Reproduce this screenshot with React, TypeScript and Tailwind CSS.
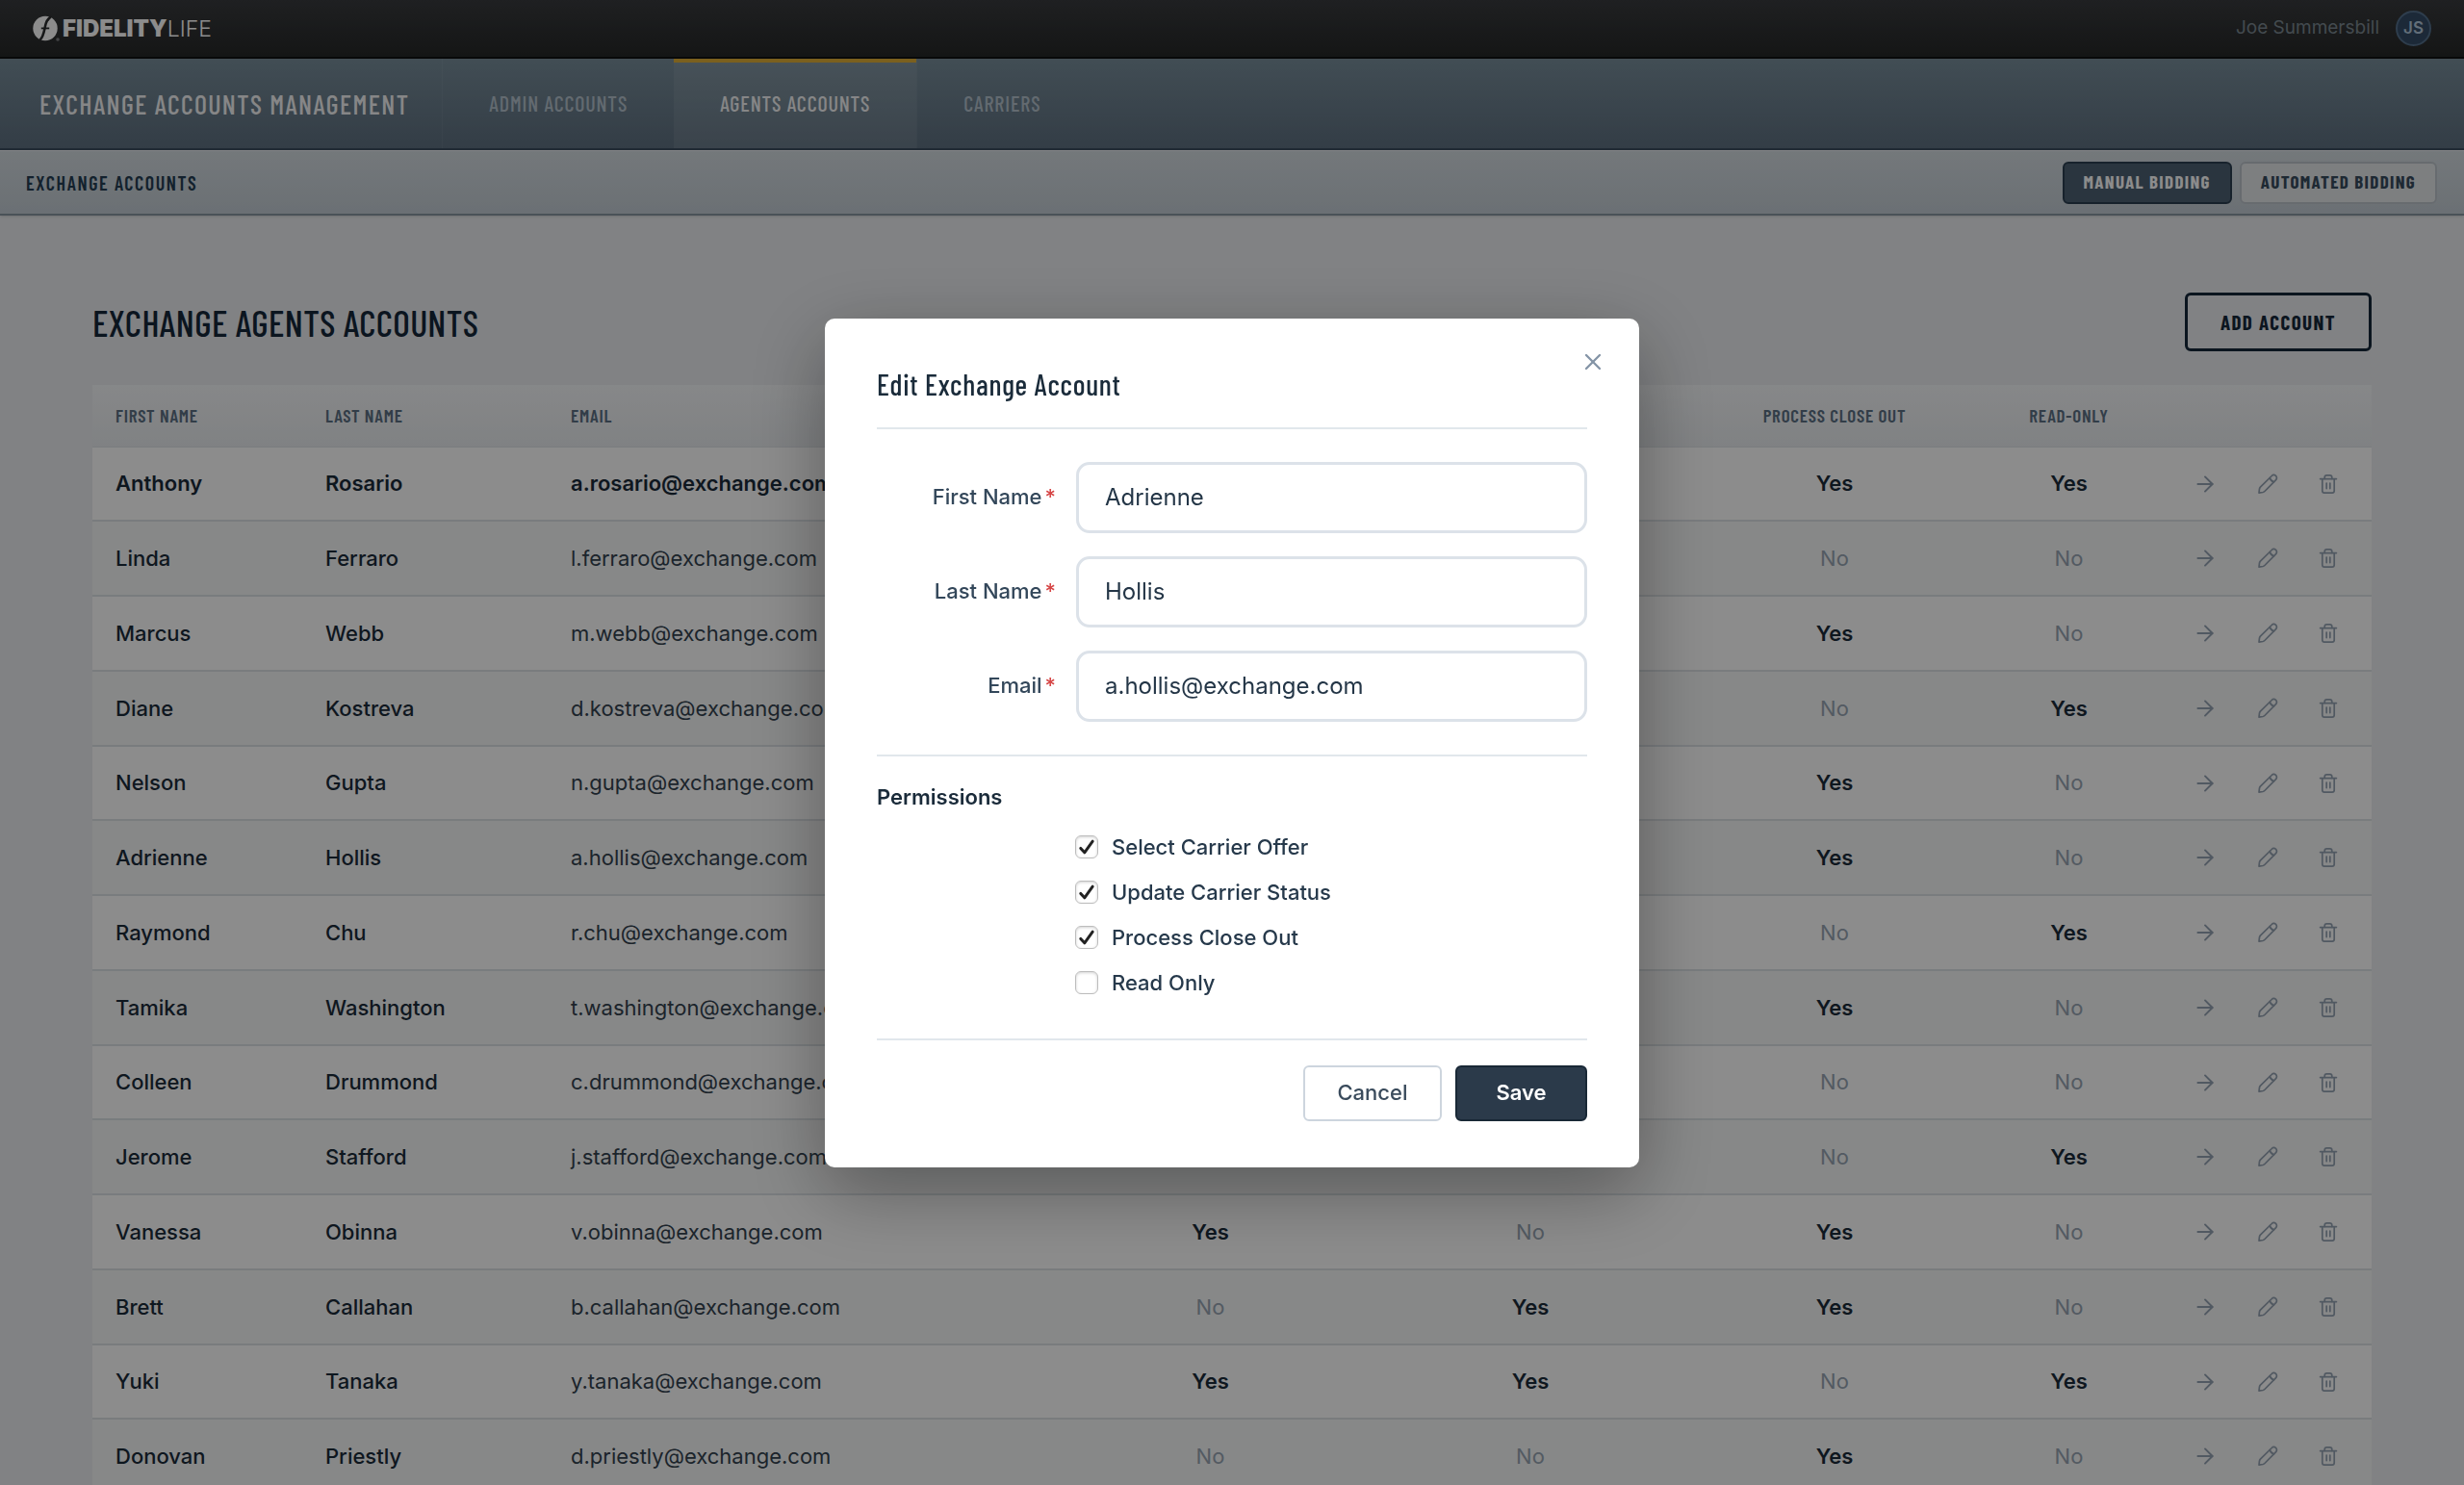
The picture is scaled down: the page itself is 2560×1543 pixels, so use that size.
import { ArrowRight, X } from "lucide-react";

const TABS = ["Admin Accounts", "Agents Accounts", "Carriers"];

type Account = {
  first: string;
  last: string;
  email: string;
  perms: boolean[];
};

// perms: select carrier offer, update carrier status, process close out, read-only
const ACCOUNTS: Account[] = [
  { first: "Anthony", last: "Rosario", email: "a.rosario@exchange.com", perms: [true, true, true, true] },
  { first: "Linda", last: "Ferraro", email: "l.ferraro@exchange.com", perms: [true, false, false, false] },
  { first: "Marcus", last: "Webb", email: "m.webb@exchange.com", perms: [true, true, true, false] },
  { first: "Diane", last: "Kostreva", email: "d.kostreva@exchange.com", perms: [false, false, false, true] },
  { first: "Nelson", last: "Gupta", email: "n.gupta@exchange.com", perms: [true, false, true, false] },
  { first: "Adrienne", last: "Hollis", email: "a.hollis@exchange.com", perms: [true, true, true, false] },
  { first: "Raymond", last: "Chu", email: "r.chu@exchange.com", perms: [false, true, false, true] },
  { first: "Tamika", last: "Washington", email: "t.washington@exchange.com", perms: [true, true, true, false] },
  { first: "Colleen", last: "Drummond", email: "c.drummond@exchange.com", perms: [true, false, false, false] },
  { first: "Jerome", last: "Stafford", email: "j.stafford@exchange.com", perms: [false, true, false, true] },
  { first: "Vanessa", last: "Obinna", email: "v.obinna@exchange.com", perms: [true, false, true, false] },
  { first: "Brett", last: "Callahan", email: "b.callahan@exchange.com", perms: [false, true, true, false] },
  { first: "Yuki", last: "Tanaka", email: "y.tanaka@exchange.com", perms: [true, true, false, true] },
  { first: "Donovan", last: "Priestly", email: "d.priestly@exchange.com", perms: [false, false, true, false] },
];

const FIELDS = [
  { id: "first-name", label: "First Name", type: "text", value: "Adrienne" },
  { id: "last-name", label: "Last Name", type: "text", value: "Hollis" },
  { id: "email", label: "Email", type: "email", value: "a.hollis@exchange.com" },
];

const PERMISSIONS = [
  { id: "select-offer", label: "Select Carrier Offer", checked: true },
  { id: "update-status", label: "Update Carrier Status", checked: true },
  { id: "close-out", label: "Process Close Out", checked: true },
  { id: "read-only", label: "Read Only", checked: false },
];

function PencilIcon() {
  return (
    <svg width="22" height="22" viewBox="0 0 22 22" fill="none" stroke="currentColor" strokeWidth="1.7" strokeLinecap="round" strokeLinejoin="round">
      <path d="M2 20.1 L2.5 15.9 Q2.7 14.9 3.4 14.1 L15.2 2.5 A2.9 2.9 0 0 1 19.6 6.7 L7.9 18.5 Q7.1 19.3 6.1 19.5 Z" />
      <path d="M13.3 4.5 Q13.9 7.7 17.5 8.7" />
    </svg>
  );
}

function TrashIcon() {
  return (
    <svg width="22" height="22" viewBox="0 0 22 22" fill="none" stroke="currentColor" strokeWidth="1.7" strokeLinecap="round" strokeLinejoin="round">
      <path d="M2.6 5.6 H19.4" />
      <path d="M7.2 5.4 V4.2 Q7.2 1.9 9.4 1.9 H12.6 Q14.8 1.9 14.8 4.2 V5.4" />
      <path d="M4.8 5.8 V18 Q4.8 20.2 7 20.2 H15 Q17.2 20.2 17.2 18 V5.8" />
      <path d="M9.2 10 V15.6 M12.8 10 V15.6" />
    </svg>
  );
}

function Logo() {
  return (
    <a href="#" className="flex items-center gap-[3px] text-white">
      <svg width="28" height="28" viewBox="0 0 28 28">
        <circle cx="13" cy="13.5" r="12.7" fill="currentColor" />
        <path d="M18.6 1.6 C13.6 4.2 13.4 9.6 12.4 14 C11.5 18.4 10.6 22.6 7.6 25.4" fill="none" stroke="#2b2c2e" strokeWidth="2.6" />
        <path d="M8.8 13.4 H17.2" stroke="#2b2c2e" strokeWidth="1.8" />
        <path d="M19.4 1 L15.6 5.4" stroke="#2b2c2e" strokeWidth="1.6" />
        <circle cx="26" cy="25" r="1.8" fill="#7d7f81" />
      </svg>
      <span className="leading-none">
        <span className="text-[24px] font-black">FIDELITY</span>
        <span className="text-[23px] font-light">LIFE</span>
      </span>
    </a>
  );
}

function TopBar() {
  return (
    <header className="flex h-[61px] items-center justify-between border-b-2 border-[#101112] bg-linear-to-b from-[#393b3e] to-[#262828] px-[34px]">
      <Logo />
      <div className="flex items-center gap-[17px]">
        <span className="text-[19px] text-[#7b8890]">Joe Summersbill</span>
        <span className="flex size-[37px] items-center justify-center rounded-full border-2 border-[#54708c] bg-[#334b66] text-[17px] font-semibold text-[#b4c8dc]">
          JS
        </span>
      </div>
    </header>
  );
}

function NavBar() {
  return (
    <nav className="flex h-[95px] items-stretch border-b-2 border-[#3c4e60] bg-linear-to-b from-[#788d9a] to-[#5e7080] font-['Barlow_Condensed','Roboto_Condensed',sans-serif] uppercase">
      <div className="flex items-center pr-[34px] pl-[41px] text-[28px] font-medium tracking-[0.05em] text-[#f4f5f6]">
        Exchange Accounts Management
      </div>
      {TABS.map((tab) => (
        <a
          key={tab}
          href="#"
          className={
            tab === "Agents Accounts"
              ? "flex items-center border-t-4 border-[#e0b038] bg-white/8 px-12 pb-1 text-[22px] font-medium tracking-[0.04em] text-[#f4f5f6]"
              : "flex items-center border-l border-white/5 px-12 text-[22px] font-medium tracking-[0.04em] text-[#b4c2cd]"
          }
        >
          {tab}
        </a>
      ))}
    </nav>
  );
}

function SubBar() {
  return (
    <div className="flex h-[68px] items-center justify-between border-t border-b-2 border-t-[#edf1f4] border-b-[#8895a1] bg-linear-to-b from-[#d3dbe0] to-[#c3ccd4] pr-7 pl-[27px] font-['Barlow_Condensed','Roboto_Condensed',sans-serif] uppercase shadow-sm">
      <span className="text-[20px] font-semibold tracking-[0.08em] text-[#243c52]">Exchange Accounts</span>
      <div className="flex gap-2">
        <button className="h-11 rounded-md border-2 border-[#2b3e50] bg-[#4e6274] px-5 text-[19px] font-bold tracking-[0.07em] text-white">
          MANUAL BIDDING
        </button>
        <button className="h-11 rounded-md border-2 border-[#bcc4cb] bg-[#e4e7ea] px-5 text-[19px] font-bold tracking-[0.07em] text-[#374b5d]">
          AUTOMATED BIDDING
        </button>
      </div>
    </div>
  );
}

function AccountsTable() {
  return (
    <table className="w-full table-fixed border-separate border-spacing-0 text-[22px]">
      <colgroup>
        <col className="w-[218px]" />
        <col className="w-[255px]" />
        <col />
        <col className="w-[315px]" />
        <col className="w-[350px]" />
        <col className="w-[282px]" />
        <col className="w-[205px]" />
        <col className="w-[212px]" />
      </colgroup>
      <thead>
        <tr className="bg-linear-to-b from-[#f5f7f9] to-[#e9ecef] text-left font-['Barlow_Condensed','Roboto_Condensed',sans-serif] text-[19px] tracking-[0.04em] text-[#5c7084] uppercase *:h-[65px] *:border-b *:border-[#dfe4e8] *:px-6 *:font-semibold">
          <th>First Name</th>
          <th>Last Name</th>
          <th>Email</th>
          <th className="text-center">Select Carrier Offer</th>
          <th className="text-center">Update Carrier Status</th>
          <th className="text-center">Process Close Out</th>
          <th className="text-center">Read-Only</th>
          <th aria-label="Actions" />
        </tr>
      </thead>
      <tbody>
        {ACCOUNTS.map((account, i) => (
          <tr
            key={account.email}
            className="bg-white text-[#1a2b3a] *:h-[78px] *:border-b-2 *:border-[#dde2e6] even:bg-[#f6f7f7] first:font-semibold [&:nth-child(4n+1)>td]:h-[77px]"
          >
            <td className={i === 0 ? "px-6" : "px-6 font-medium"}>{account.first}</td>
            <td className={i === 0 ? "px-6" : "px-6 font-medium"}>{account.last}</td>
            <td className={i === 0 ? "px-6" : "px-6 text-[#33424f]"}>{account.email}</td>
            {account.perms.map((allowed, n) => (
              <td key={n} className={allowed ? "text-center font-semibold" : "text-center font-normal text-[#97a5b3]"}>
                {allowed ? "Yes" : "No"}
              </td>
            ))}
            <td className="text-[#94a2b2]">
              <div className="flex items-center justify-end gap-[41px] pr-[34px]">
                <button aria-label="Open account">
                  <ArrowRight size={26} strokeWidth={1.8} />
                </button>
                <button aria-label="Edit account">
                  <PencilIcon />
                </button>
                <button aria-label="Delete account">
                  <TrashIcon />
                </button>
              </div>
            </td>
          </tr>
        ))}
      </tbody>
    </table>
  );
}

function EditDialog() {
  return (
    <div className="fixed inset-0 flex items-center justify-center bg-black/45">
      <form
        role="dialog"
        aria-labelledby="dialog-title"
        className="relative w-[846px] rounded-[10px] bg-white px-[54px] pt-[46px] pb-12 shadow-[0_24px_80px_rgba(0,0,0,0.35)]"
      >
        <button type="button" aria-label="Close" className="absolute top-[31px] right-[34px] text-[#8494a6]">
          <X size={28} strokeWidth={2} />
        </button>
        <h2
          id="dialog-title"
          className="border-b-2 border-[#e1e7ec] pb-[23px] font-['Barlow_Condensed','Roboto_Condensed',sans-serif] text-[30px] leading-[44px] font-medium tracking-wide text-[#1a2b3a]"
        >
          Edit Exchange Account
        </h2>

        <div className="flex flex-col gap-6 border-b-2 border-[#e1e7ec] py-[34px]">
          {FIELDS.map((field) => (
            <div key={field.id} className="flex items-center">
              <label htmlFor={field.id} className="w-[207px] pr-[21px] text-right text-[22px] font-medium text-[#33475a]">
                {field.label}
                <span className="ml-[3px] text-[#d64545]">*</span>
              </label>
              <input
                id={field.id}
                type={field.type}
                defaultValue={field.value}
                className="h-[74px] min-w-0 flex-1 rounded-[14px] border-[3px] border-[#dce2e9] bg-white px-[27px] text-[24px] text-[#243647] outline-none"
              />
            </div>
          ))}
        </div>

        <fieldset className="border-b-2 border-[#e1e7ec] pt-[26px] pb-[42px]">
          <legend className="float-left w-full text-[22px] leading-8 font-semibold text-[#1a2b3a]">Permissions</legend>
          <div className="flex flex-col gap-[15px] pt-5 pl-[206px]">
            {PERMISSIONS.map((perm) => (
              <label key={perm.id} className="flex items-center gap-[14px] text-[22px] leading-8 font-medium text-[#26394b]">
                <span className="relative size-6">
                  <input
                    type="checkbox"
                    defaultChecked={perm.checked}
                    className="peer block size-6 appearance-none rounded-[6px] border border-[#bdbdbd] bg-white shadow-[inset_0_1px_3px_rgba(0,0,0,0.18)]"
                  />
                  <svg
                    className="pointer-events-none absolute inset-0 hidden peer-checked:block"
                    width="24"
                    height="24"
                    viewBox="0 0 24 24"
                    fill="none"
                    stroke="#222"
                    strokeWidth="3"
                    strokeLinecap="round"
                    strokeLinejoin="round"
                  >
                    <path d="M5.8 13.4 L9.8 17.8 L18.2 6.2" />
                  </svg>
                </span>
                {perm.label}
              </label>
            ))}
          </div>
        </fieldset>

        <div className="flex justify-end gap-[14px] pt-[26px]">
          <button type="button" className="h-[58px] w-[144px] rounded-md border-2 border-[#cdd5de] bg-white text-[22px] font-medium text-[#3a4b5c]">
            Cancel
          </button>
          <button type="submit" className="h-[58px] w-[137px] rounded-md border-2 border-[#192836] bg-[#2b3a4a] text-[22px] font-semibold text-white">
            Save
          </button>
        </div>
      </form>
    </div>
  );
}

export default function App() {
  return (
    <div className="h-screen overflow-hidden bg-[#ebedf0] font-['Inter',sans-serif]">
      <TopBar />
      <NavBar />
      <SubBar />
      <main className="px-24 pt-20">
        <div className="mb-[35px] flex items-center justify-between font-['Barlow_Condensed','Roboto_Condensed',sans-serif] uppercase">
          <h1 className="text-[38px] leading-none font-medium tracking-[0.01em] text-[#14273a]">Exchange Agents Accounts</h1>
          <button className="h-[61px] rounded-md border-[3px] border-[#14273a] px-[34px] text-[21px] font-bold tracking-[0.07em] text-[#14273a]">
            ADD ACCOUNT
          </button>
        </div>
        <AccountsTable />
      </main>
      <EditDialog />
    </div>
  );
}
